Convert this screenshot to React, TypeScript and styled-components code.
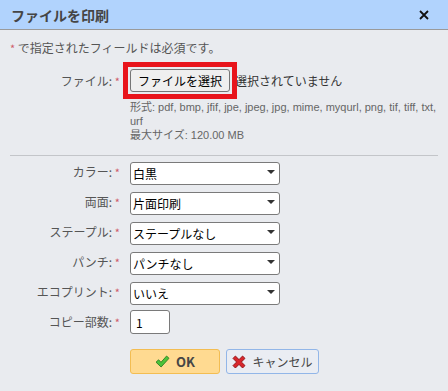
import styled, { createGlobalStyle } from "styled-components";

const GlobalStyle = createGlobalStyle`
  html, body {
    margin: 0;
    padding: 0;
    background: #e9ebef;
  }
  body {
    font-family: "Noto Sans CJK JP", "Noto Sans", sans-serif;
  }
`;

const Dialog = styled.div`
  width: 448px;
  height: 391px;
  background: #e9ebef;
  display: flex;
  flex-direction: column;
  overflow: hidden;
`;

const Header = styled.div`
  height: 30px;
  box-sizing: border-box;
  border-bottom: 1px solid #9a9a9a;
  background: #b1d3fd;
  display: flex;
  align-items: center;
  justify-content: space-between;
  padding: 0 19px 0 11px;
`;

const Title = styled.h1`
  margin: 0;
  font-size: 14px;
  font-weight: 700;
  color: #454545;
  line-height: 1;
`;

const CloseButton = styled.button`
  border: 0;
  background: none;
  padding: 0;
  width: 10px;
  height: 10px;
  display: flex;
  align-items: center;
  justify-content: center;
  cursor: pointer;
`;

const Body = styled.div`
  padding: 10px 10px 0 10px;
`;

const Note = styled.p`
  margin: 0;
  font-size: 12px;
  line-height: 16px;
  color: #555;
`;

const Star = styled.span`
  color: #cf5c6a;
  font-size: 11px;
`;

const FileRow = styled.div`
  display: grid;
  grid-template-columns: 110px 1fr;
  column-gap: 10px;
  margin-top: 13px;
`;

const Label = styled.label<{ $top?: boolean }>`
  font-size: 12px;
  color: #555;
  text-align: right;
  align-self: ${(p) => (p.$top ? "start" : "center")};
  line-height: 23px;
  white-space: nowrap;
`;

const FilePicker = styled.div`
  display: flex;
  align-items: center;
  gap: 5px;
  height: 23px;
  font-size: 12px;
  color: #333;
`;

const Highlight = styled.span`
  position: relative;
  z-index: 1;
  display: inline-flex;
  border: 5px solid #e8141b;
  padding: 2px;
  margin: -7px;
`;

const FileButton = styled.button`
  width: 100px;
  height: 23px;
  padding: 0;
  border: 1px solid #767676;
  border-radius: 3px;
  background: #efefef;
  color: #000;
  font-family: inherit;
  font-size: 12px;
`;

const FileInfo = styled.div`
  grid-column: 2;
  margin-top: 7px;
  font-family: "Liberation Sans", "Noto Sans CJK JP", sans-serif;
  font-size: 11px;
  line-height: 14px;
  color: #666;
  white-space: nowrap;
`;

const Divider = styled.hr`
  margin: 13px 0 4px 0;
  border: 0;
  border-top: 1px solid #c3c5c9;
`;

const Form = styled.div`
  display: grid;
  grid-template-columns: 110px auto;
  column-gap: 10px;
  row-gap: 6px;
  justify-content: start;
`;

const SelectBox = styled.div`
  position: relative;
  width: 150px;
  height: 23px;
  &::after {
    content: "";
    position: absolute;
    right: 5px;
    top: 10px;
    border-left: 4px solid transparent;
    border-right: 4px solid transparent;
    border-top: 4px solid #333;
    pointer-events: none;
  }
`;

const Select = styled.select`
  appearance: none;
  box-sizing: border-box;
  width: 100%;
  height: 100%;
  border: 1px solid #7a7a7a;
  border-radius: 3px;
  background: #fff;
  padding: 0 16px 0 2px;
  font-family: inherit;
  font-size: 12px;
  color: #000;
`;

const NumberInput = styled.input`
  box-sizing: border-box;
  width: 40px;
  height: 24px;
  border: 1px solid #7a7a7a;
  border-radius: 3px;
  background: #fff;
  padding: 0 5px;
  font-family: inherit;
  font-size: 12px;
  color: #000;
`;

const Actions = styled.div`
  display: flex;
  gap: 6px;
  margin: 15px 0 0 120px;
`;

const ActionButton = styled.button<{ $primary?: boolean }>`
  box-sizing: border-box;
  height: 25px;
  width: ${(p) => (p.$primary ? "90px" : "93px")};
  border-radius: 3px;
  border: 1px solid ${(p) => (p.$primary ? "#f3bd52" : "#92b6e8")};
  background: ${(p) => (p.$primary ? "#ffda91" : "#eaedf3")};
  display: flex;
  align-items: center;
  justify-content: center;
  gap: 6px;
  padding: 0;
  font-family: inherit;
  font-size: ${(p) => (p.$primary ? "13px" : "12px")};
  font-weight: ${(p) => (p.$primary ? 700 : 400)};
  color: #464646;
`;

const fields = [
  { label: "カラー:", value: "白黒" },
  { label: "両面:", value: "片面印刷" },
  { label: "ステープル:", value: "ステープルなし" },
  { label: "パンチ:", value: "パンチなし" },
  { label: "エコプリント:", value: "いいえ" },
];

const CheckIcon = () => (
  <svg width="15" height="13" viewBox="0 0 15 13">
    <path
      d="M1 7.2 L3.6 4.8 L6 7.3 L11.6 1 L14 3.3 L6.1 12 Z"
      fill="#4cc43a"
      stroke="#2f7f24"
      strokeWidth="0.9"
      strokeLinejoin="round"
    />
  </svg>
);

const CrossIcon = () => (
  <svg width="14" height="14" viewBox="0 0 14 14">
    <path
      d="M1 3.4 L3.4 1 L7 4.6 L10.6 1 L13 3.4 L9.4 7 L13 10.6 L10.6 13 L7 9.4 L3.4 13 L1 10.6 L4.6 7 Z"
      fill="#d8262c"
      stroke="#8e1114"
      strokeWidth="0.9"
      strokeLinejoin="round"
    />
  </svg>
);

export default function App() {
  return (
    <>
      <GlobalStyle />
      <Dialog>
        <Header>
          <Title>ファイルを印刷</Title>
          <CloseButton aria-label="閉じる">
            <svg width="10" height="10" viewBox="0 0 10 10">
              <path d="M1 1 L9 9 M9 1 L1 9" stroke="#111" strokeWidth="1.8" />
            </svg>
          </CloseButton>
        </Header>
        <Body>
          <Note>
            <Star>*</Star> で指定されたフィールドは必須です。
          </Note>
          <FileRow>
            <Label $top>
              ファイル: <Star>*</Star>
            </Label>
            <FilePicker>
              <Highlight>
                <FileButton>ファイルを選択</FileButton>
              </Highlight>
              選択されていません
            </FilePicker>
            <FileInfo>
              形式: pdf, bmp, jfif, jpe, jpeg, jpg, mime, myqurl, png, tif, tiff, txt,
              <br />
              urf
              <br />
              最大サイズ: 120.00 MB
            </FileInfo>
          </FileRow>
          <Divider />
          <Form>
            {fields.map((f) => (
              <>
                <Label key={f.label}>
                  {f.label} <Star>*</Star>
                </Label>
                <SelectBox key={f.label + "-s"}>
                  <Select defaultValue={f.value}>
                    <option>{f.value}</option>
                  </Select>
                </SelectBox>
              </>
            ))}
            <Label>
              コピー部数: <Star>*</Star>
            </Label>
            <NumberInput defaultValue="1" />
          </Form>
          <Actions>
            <ActionButton $primary>
              <CheckIcon />
              OK
            </ActionButton>
            <ActionButton>
              <CrossIcon />
              キャンセル
            </ActionButton>
          </Actions>
        </Body>
      </Dialog>
    </>
  );
}
